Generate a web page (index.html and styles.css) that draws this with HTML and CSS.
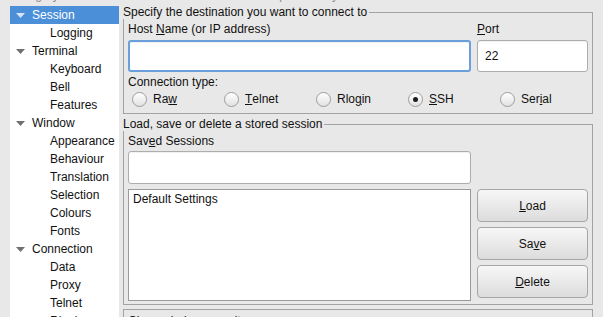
FILE: index.html
```html
<!DOCTYPE html>
<html lang="en">
<head>
    <meta charset="UTF-8">
    <title>PuTTY Configuration</title>
    <link rel="stylesheet" href="styles.css">
</head>
<body>
    <div class="window">
        <!-- Заголовки (обрезаны сверху) -->
        <div class="top-labels">
            <div class="cat">Category:</div>
            <div class="heading">Basic options for your PuTTY session</div>
        </div>

        <div class="main">
            <!-- Дерево категорий -->
            <div class="tree">
                <div class="row parent selected"><svg class="arrow" width="9" height="5"><path d="M0 0H9L4.5 5Z"/></svg>Session</div>
                <div class="row child">Logging</div>
                <div class="row parent"><svg class="arrow" width="9" height="5"><path d="M0 0H9L4.5 5Z"/></svg>Terminal</div>
                <div class="row child">Keyboard</div>
                <div class="row child">Bell</div>
                <div class="row child">Features</div>
                <div class="row parent"><svg class="arrow" width="9" height="5"><path d="M0 0H9L4.5 5Z"/></svg>Window</div>
                <div class="row child">Appearance</div>
                <div class="row child">Behaviour</div>
                <div class="row child">Translation</div>
                <div class="row child">Selection</div>
                <div class="row child">Colours</div>
                <div class="row child">Fonts</div>
                <div class="row parent"><svg class="arrow" width="9" height="5"><path d="M0 0H9L4.5 5Z"/></svg>Connection</div>
                <div class="row child">Data</div>
                <div class="row child">Proxy</div>
                <div class="row child">Telnet</div>
                <div class="row child">Rlogin</div>
            </div>

            <div class="panel">
                <!-- Адрес назначения -->
                <div class="frame">
                    <div class="frame-title"><span>Specify the destination you want to connect to</span></div>
                    <div class="frame-body">
                        <div class="dest-grid">
                            <div class="label">Host <u>N</u>ame (or IP address)</div>
                            <div class="label"><u>P</u>ort</div>
                            <div class="entry focused"></div>
                            <div class="entry port">22</div>
                        </div>
                        <div class="conn-label">Connection type:</div>
                        <div class="radios">
                            <div class="radio"><span class="dot"></span>Ra<u>w</u></div>
                            <div class="radio"><span class="dot"></span><u>T</u>elnet</div>
                            <div class="radio"><span class="dot"></span>Rlo<u>g</u>in</div>
                            <div class="radio"><span class="dot checked"></span><u>S</u>SH</div>
                            <div class="radio"><span class="dot"></span>Ser<u>i</u>al</div>
                        </div>
                    </div>
                </div>

                <!-- Сохранённые сессии -->
                <div class="frame second">
                    <div class="frame-title"><span>Load, save or delete a stored session</span></div>
                    <div class="frame-body sessions">
                        <div class="label saved-label">Sav<u>e</u>d Sessions</div>
                        <div class="entry saved-entry"></div>
                        <div class="listbox">
                            <div class="list-item">Default Settings</div>
                        </div>
                        <div class="buttons">
                            <button class="button"><u>L</u>oad</button>
                            <button class="button">Sa<u>v</u>e</button>
                            <button class="button"><u>D</u>elete</button>
                        </div>
                    </div>
                </div>

                <!-- Закрытие окна -->
                <div class="frame third">
                    <div class="close-label">Close window on exit:</div>
                </div>
            </div>
        </div>
    </div>
</body>
</html>
```

FILE: styles.css
```css
body {
    margin: 0;
    height: 317px;
    overflow: hidden;
    background-color: #e8e8e8;
    font-family: "Liberation Sans", Arial, sans-serif;
    font-size: 12px;
    line-height: 14px;
    color: #111;
}

u {
    text-decoration-thickness: 1px;
    text-underline-offset: 1px;
}

.window {
    display: flex;
    flex-direction: column;
}

.top-labels {
    display: flex;
    height: 14px;
    margin-top: -12px;
    color: #8c8c8c;
}

.top-labels .cat {
    width: 123px;
    padding-left: 10px;
    box-sizing: border-box;
}

.top-labels .heading {
    padding-left: 117px;
}

.main {
    display: flex;
    gap: 4px;
    padding: 0 10px;
}

/* Дерево */
.tree {
    width: 109px;
    height: 330px;
    margin-top: 4px;
    background-color: #fff;
}

.row {
    display: flex;
    align-items: center;
    height: 18px;
    white-space: nowrap;
}

.row.parent {
    padding-left: 6px;
}

.row.child {
    padding-left: 40px;
}

.arrow {
    margin-right: 7px;
    fill: #707070;
}

.row.selected {
    background-color: #4b8fd9;
    color: #fff;
}

.row.selected .arrow {
    fill: #d8e6f7;
}

/* Панель справа */
.panel {
    width: 470px;
    margin-top: 3px;
    display: flex;
    flex-direction: column;
}

.frame-title {
    display: flex;
    height: 14px;
}

.frame-title span {
    padding-right: 2px;
    white-space: nowrap;
}

.frame-title::after {
    content: "";
    flex: 1;
    align-self: flex-end;
    height: 6px;
    border-top: 1px solid #a2a2a2;
    border-right: 1px solid #a2a2a2;
}

.frame-body {
    border: 1px solid #a2a2a2;
    border-top: none;
    padding: 3px 4px 6px;
}

.dest-grid {
    display: grid;
    grid-template-columns: 1fr 111px;
    column-gap: 6px;
    row-gap: 4px;
}

.entry {
    height: 32px;
    box-sizing: border-box;
    background-color: #fff;
    border: 1px solid #adadad;
    border-radius: 3px;
    box-shadow: inset 0 1px 1px rgba(0, 0, 0, 0.06);
}

.entry.focused {
    border: 2px solid #6a9fdb;
}

.entry.port {
    padding-left: 7px;
    line-height: 30px;
}

.conn-label {
    margin-top: 3px;
}

.radios {
    display: grid;
    grid-template-columns: repeat(5, 1fr);
    height: 16px;
    margin-top: 2px;
}

.radio {
    display: flex;
    align-items: center;
    padding-left: 4px;
    white-space: nowrap;
}

.dot {
    width: 13px;
    height: 13px;
    margin-right: 6px;
    border: 1px solid #9d9d9d;
    border-radius: 50%;
    background: linear-gradient(#ffffff, #e2e2e2);
    display: flex;
    align-items: center;
    justify-content: center;
}

.dot.checked::after {
    content: "";
    width: 5px;
    height: 5px;
    border-radius: 50%;
    background-color: #1c1c1c;
}

.frame.second {
    margin-top: 3px;
}

.sessions {
    display: grid;
    grid-template-columns: 1fr 111px;
    grid-template-areas:
        "label ."
        "entry ."
        "list buttons";
    column-gap: 6px;
    padding-bottom: 3px;
}

.saved-label {
    grid-area: label;
}

.saved-entry {
    grid-area: entry;
    height: 33px;
    margin-top: 3px;
}

.listbox {
    grid-area: list;
    height: 112px;
    margin-top: 5px;
    box-sizing: border-box;
    background-color: #fff;
    border: 1px solid #9a9a9a;
    padding: 1px 4px;
}

.list-item {
    height: 16px;
    line-height: 16px;
}

.buttons {
    grid-area: buttons;
    margin-top: 5px;
    display: flex;
    flex-direction: column;
    gap: 5px;
}

.button {
    height: 33px;
    font-family: inherit;
    font-size: 12px;
    color: #111;
    background: linear-gradient(#f7f7f7, #dcdcdc);
    border: 1px solid #a6a6a6;
    border-radius: 4px;
    padding: 0;
}

.frame.third {
    margin-top: 4px;
    height: 40px;
    border: 1px solid #a2a2a2;
    padding: 4px 4px 0;
}
```
